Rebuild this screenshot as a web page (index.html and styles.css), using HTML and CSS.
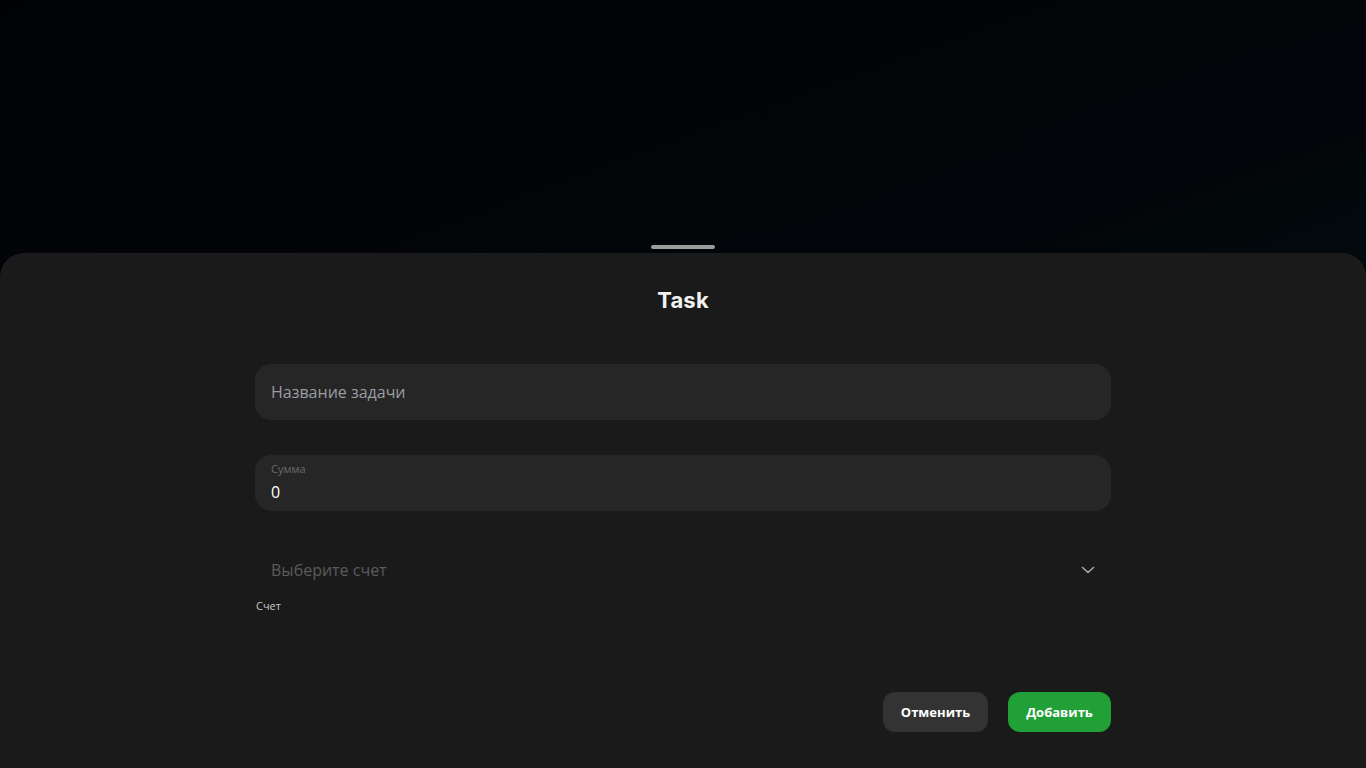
FILE: index.html
```html
<!DOCTYPE html>
<html lang="ru">
<head>
<meta charset="utf-8">
<title>Task</title>
<link rel="stylesheet" href="styles.css">
</head>
<body>
<div class="screen">
  <div class="handle"></div>
  <section class="sheet">
    <h1 class="title">Task</h1>
    <form class="form">
      <div class="field">
        <span class="placeholder">Название задачи</span>
      </div>
      <div class="field field-labeled">
        <span class="field-label">Сумма</span>
        <span class="field-value">0</span>
      </div>
      <div class="select-block">
        <div class="select">
          <span class="select-placeholder">Выберите счет</span>
          <svg class="chevron" width="14" height="8" viewBox="0 0 14 8" fill="none"><path d="M1.5 1.5 L7 6.5 L12.5 1.5" stroke="#a8a8a8" stroke-width="1.6" stroke-linecap="round" stroke-linejoin="round"/></svg>
        </div>
        <span class="select-label">Счет</span>
      </div>
      <div class="actions">
        <button type="button" class="btn btn-secondary">Отменить</button>
        <button type="button" class="btn btn-primary">Добавить</button>
      </div>
    </form>
  </section>
</div>
</body>
</html>
```

FILE: styles.css
```css
* { box-sizing: border-box; }
html, body { margin: 0; padding: 0; }
body {
  width: 1366px;
  height: 768px;
  overflow: hidden;
  font-family: "Open Sans", "Noto Sans", sans-serif;
  background: linear-gradient(160deg, #010204 0%, #020509 45%, #031413 100%);
}
.screen {
  height: 768px;
  display: flex;
  flex-direction: column;
  justify-content: flex-end;
  align-items: center;
}
.handle {
  width: 64px;
  height: 4px;
  border-radius: 2px;
  background: #9b9b9b;
  margin-bottom: 4px;
}
.sheet {
  width: 100%;
  height: 515px;
  background: #1a1a1a;
  border-radius: 24px 24px 0 0;
  padding-top: 31px;
  display: flex;
  flex-direction: column;
  align-items: center;
}
.title {
  margin: 0;
  font-size: 22px;
  line-height: 32px;
  font-weight: 700;
  color: #f2f2f2;
  font-family: "Inter", "Open Sans", sans-serif;
  letter-spacing: 0.2px;
}
.form {
  width: 856px;
  margin-top: 48px;
  display: flex;
  flex-direction: column;
}
.field {
  height: 56px;
  background: #262626;
  border-radius: 16px;
  padding: 0 16px;
  display: flex;
  align-items: center;
}
.field + .field { margin-top: 35px; }
.placeholder {
  font-size: 16px;
  color: #9a9da3;
}
.field-labeled {
  flex-direction: column;
  align-items: flex-start;
  justify-content: center;
  padding-bottom: 2px;
}
.field-label {
  font-size: 11px;
  line-height: 14px;
  color: #6a6a6a;
}
.field-value {
  font-size: 16px;
  line-height: 22px;
  color: #ffffff;
  margin-top: 5px;
}
.select-block {
  margin-top: 34px;
  display: flex;
  flex-direction: column;
}
.select {
  height: 50px;
  padding: 0 16px 0 16px;
  display: flex;
  align-items: center;
  justify-content: space-between;
}
.select-placeholder {
  font-size: 16px;
  color: #5b5b5b;
}
.select-label {
  margin-top: 4px;
  padding-left: 1px;
  font-size: 11px;
  line-height: 14px;
  color: #c8c8c8;
}
.actions {
  margin-top: 79px;
  display: flex;
  justify-content: flex-end;
  gap: 20px;
}
.btn {
  height: 40px;
  border: none;
  border-radius: 12px;
  font-family: "Open Sans", "Noto Sans", sans-serif;
  font-size: 13px;
  font-weight: 700;
  color: #ffffff;
  padding: 0;
  cursor: pointer;
}
.btn-secondary { background: #333333; width: 105px; }
.btn-primary { background: #21a038; width: 103px; }
```
